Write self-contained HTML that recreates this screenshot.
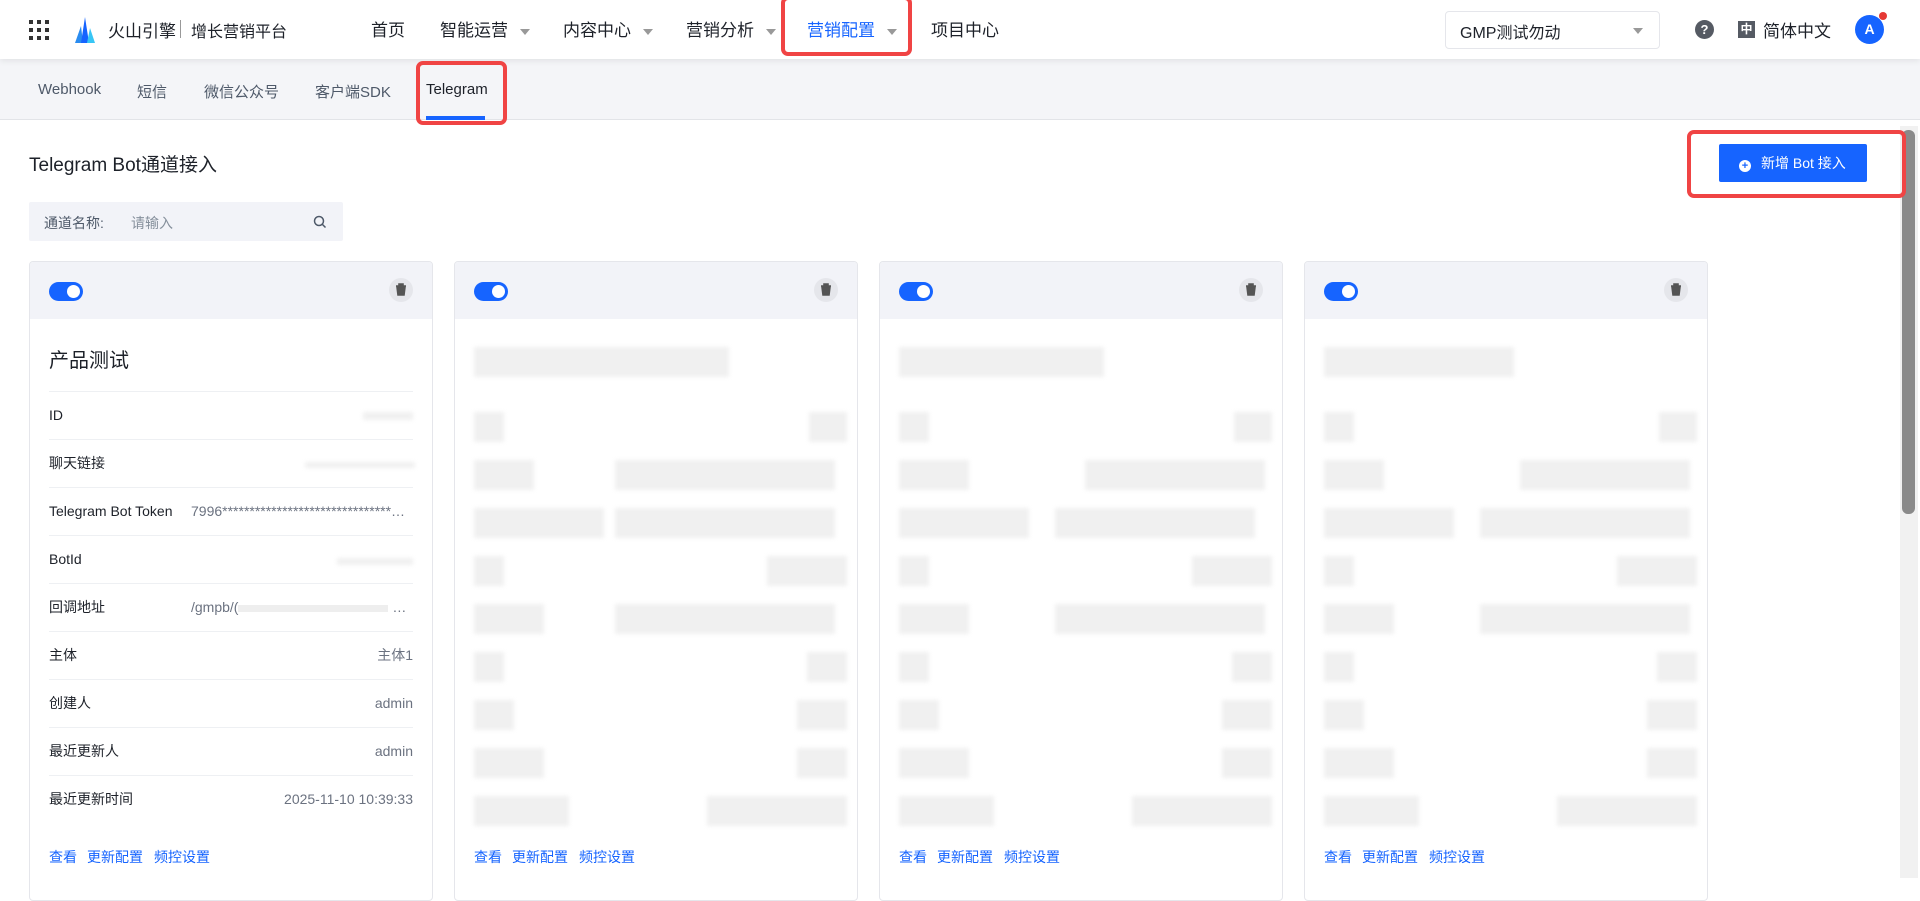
<!DOCTYPE html>
<html><head><meta charset="utf-8"><style>
*{box-sizing:border-box;margin:0;padding:0}
body{width:1920px;height:878px;overflow:hidden;background:#fff;font-family:"Liberation Sans","Noto Sans CJK SC",sans-serif;color:#1d2129;position:relative}
.abs{position:absolute}
.hdr{left:0;top:0;width:1920px;height:59px;background:#fff;box-shadow:0 2px 6px rgba(0,0,0,.08);z-index:2}
.nav{top:16px;font-size:17px;color:#1d2129}
.caret{display:inline-block;width:0;height:0;border-left:5px solid transparent;border-right:5px solid transparent;border-top:6px solid #999;margin-left:12px;vertical-align:middle}
.sub{left:0;top:59px;width:1920px;height:61px;background:#f4f5f8;border-bottom:1px solid #e2e4e8}
.tab{font-size:15px;color:#4e5969}
.red{border:4px solid #f04444;border-radius:7px;z-index:5}
.card{top:261px;width:404px;height:640px;border:1px solid #e5e6eb;border-radius:4px;background:#fff;overflow:hidden}
.ch{height:57px;background:#f2f3f8;position:relative}
.tog{position:absolute;left:19px;top:20px;width:34px;height:19px;border-radius:10px;background:#1664ff}
.tog:after{content:"";position:absolute;right:3px;top:3px;width:13px;height:13px;border-radius:50%;background:#fff}
.del{position:absolute;right:19px;top:16px;width:24px;height:24px;border-radius:50%;background:#e5e6eb}
.row{position:absolute;left:19px;right:19px;height:48px;border-top:1px solid #eef0f3;font-size:14px;color:#1d2129;line-height:46px}
.row .v{position:absolute;right:0;top:0;color:#6b7280}
.lnk{position:absolute;top:585px;font-size:14px;color:#1664ff}
.bl{position:absolute;background:#f0f0f0;filter:blur(2px)}
</style></head><body>
<div class="abs hdr">
 <div class="abs" style="left:29px;top:20px;width:20px;height:20px;display:grid;grid-template-columns:repeat(3,4px);gap:4px">
  <i style="background:#333"></i><i style="background:#333"></i><i style="background:#333"></i><i style="background:#333"></i><i style="background:#333"></i><i style="background:#333"></i><i style="background:#333"></i><i style="background:#333"></i><i style="background:#333"></i></div>
 <svg class="abs" style="left:73px;top:16px" width="24" height="28" viewBox="0 0 24 28"><path d="M2 27 L8 10 L10 27Z" fill="#2a8cf0"/><path d="M8 27 L12 1 L16 27Z" fill="#1664ff"/><path d="M14 27 L17 12 L22 27Z" fill="#38c6f5"/></svg>
 <div class="abs" style="left:108px;top:17px;font-size:17px">火山引擎</div>
 <div class="abs" style="left:180px;top:20px;width:1px;height:18px;background:#999"></div>
 <div class="abs" style="left:191px;top:18px;font-size:16px">增长营销平台</div>
 <div class="abs nav" style="left:371px">首页</div>
 <div class="abs nav" style="left:440px">智能运营<span class="caret"></span></div>
 <div class="abs nav" style="left:563px">内容中心<span class="caret"></span></div>
 <div class="abs nav" style="left:686px">营销分析<span class="caret"></span></div>
 <div class="abs nav" style="left:807px;color:#1664ff">营销配置<span class="caret"></span></div>
 <div class="abs nav" style="left:931px">项目中心</div>
 <div class="abs" style="left:1445px;top:11px;width:215px;height:38px;border:1px solid #e5e6eb;border-radius:4px;font-size:16px;padding:7px 14px">GMP测试勿动<span class="caret" style="position:absolute;right:16px;top:16px"></span></div>
 <div class="abs" style="left:1695px;top:20px;width:19px;height:19px;border-radius:50%;background:#555a63;color:#fff;font-size:13px;font-weight:bold;text-align:center;line-height:19px">?</div>
 <div class="abs" style="left:1738px;top:21px;width:17px;height:17px;background:#555a63;color:#fff;font-size:12px;text-align:center;line-height:17px;font-weight:bold">中</div>
 <div class="abs" style="left:1763px;top:17px;font-size:17px">简体中文</div>
 <div class="abs" style="left:1855px;top:15px;width:29px;height:29px;border-radius:50%;background:#1664ff;color:#fff;font-size:14px;text-align:center;line-height:29px;font-weight:bold">A</div>
 <div class="abs" style="left:1879px;top:12px;width:8px;height:8px;border-radius:50%;background:#e53935"></div>
</div>
<div class="abs red" style="left:781px;top:-4px;width:131px;height:60px"></div>
<div class="abs sub">
 <div class="abs tab" style="left:38px;top:22px">Webhook</div>
 <div class="abs tab" style="left:137px;top:22px">短信</div>
 <div class="abs tab" style="left:204px;top:22px">微信公众号</div>
 <div class="abs tab" style="left:315px;top:22px">客户端SDK</div>
 <div class="abs tab" style="left:426px;top:22px;color:#1d2129">Telegram</div>
 <div class="abs" style="left:426px;top:57px;width:59px;height:4px;background:#1664ff"></div>
</div>
<div class="abs red" style="left:416px;top:61px;width:91px;height:64px"></div>
<div class="abs" style="left:29px;top:150px;font-size:19px">Telegram Bot通道接入</div>
<div class="abs" style="left:1719px;top:144px;width:148px;height:38px;background:#1664ff;border-radius:2px;color:#fff;font-size:14px;line-height:38px;padding-left:20px"><span style="display:inline-block;width:12px;height:12px;border-radius:50%;background:#fff;color:#1664ff;font-size:11px;line-height:12px;text-align:center;font-weight:bold;margin-right:10px;vertical-align:-1px">+</span>新增 Bot 接入</div>
<div class="abs red" style="left:1687px;top:130px;width:219px;height:68px"></div>
<div class="abs" style="left:1900px;top:126px;width:18px;height:752px;background:#f1f1f1"></div>
<div class="abs" style="left:1902px;top:130px;width:13px;height:384px;background:#8a8a8a;border-radius:6px"></div>
<div class="abs" style="left:29px;top:202px;width:314px;height:39px;background:#f2f3f8;border-radius:2px;font-size:14px">
 <span class="abs" style="left:15px;top:11px;color:#4e5969">通道名称:</span><span class="abs" style="left:102px;top:11px;color:#86909c">请输入</span>
 <svg class="abs" style="left:284px;top:13px" width="14" height="14" viewBox="0 0 14 14"><circle cx="6" cy="6" r="4.5" stroke="#4e5969" stroke-width="1.5" fill="none"/><path d="M9.5 9.5 L12.5 12.5" stroke="#4e5969" stroke-width="1.5"/></svg>
</div>

<div class="abs card" style="left:29px">
 <div class="ch"><div class="tog"></div><div class="del"><svg width="24" height="24" viewBox="0 0 24 24"><path d="M7 8h10M10 8V6h4v2M8 9h8l-1 8H9z" stroke="#555" stroke-width="1.6" fill="#555"/></svg></div></div>
 <div class="abs" style="left:19px;top:82px;font-size:20px">产品测试</div>
 <div class="row" style="top:129px">ID<span class="bl" style="right:0;top:20px;width:50px;height:8px"></span></div>
 <div class="row" style="top:177px">聊天链接<span class="bl" style="right:-2px;top:22px;width:110px;height:6px"></span></div>
 <div class="row" style="top:225px">Telegram Bot Token<span class="v" style="left:142px;right:auto">7996*******************************…</span></div>
 <div class="row" style="top:273px">BotId<span class="bl" style="right:0;top:22px;width:76px;height:7px"></span></div>
 <div class="row" style="top:321px">回调地址<span class="v" style="left:142px;right:auto">/gmpb/(<span style="display:inline-block;width:150px;height:7px;background:#eee"></span> …</span></div>
 <div class="row" style="top:369px">主体<span class="v">主体1</span></div>
 <div class="row" style="top:417px">创建人<span class="v">admin</span></div>
 <div class="row" style="top:465px">最近更新人<span class="v">admin</span></div>
 <div class="row" style="top:513px">最近更新时间<span class="v">2025-11-10 10:39:33</span></div>
 <span class="lnk" style="left:19px">查看</span><span class="lnk" style="left:57px">更新配置</span><span class="lnk" style="left:124px">频控设置</span>
</div>

<div class="abs card" style="left:454px">
 <div class="ch"><div class="tog"></div><div class="del"><svg width="24" height="24" viewBox="0 0 24 24"><path d="M7 8h10M10 8V6h4v2M8 9h8l-1 8H9z" stroke="#555" stroke-width="1.6" fill="#555"/></svg></div></div>
 <div class="bl" style="left:19px;top:85px;width:255px;height:30px"></div>
 <div class="bl" style="left:19px;top:150px;width:30px;height:30px"></div><div class="bl" style="right:10px;top:150px;width:38px;height:30px"></div>
 <div class="bl" style="left:19px;top:198px;width:60px;height:30px"></div><div class="bl" style="left:160px;top:198px;width:220px;height:30px"></div>
 <div class="bl" style="left:19px;top:246px;width:130px;height:30px"></div><div class="bl" style="left:160px;top:246px;width:220px;height:30px"></div>
 <div class="bl" style="left:19px;top:294px;width:30px;height:30px"></div><div class="bl" style="right:10px;top:294px;width:80px;height:30px"></div>
 <div class="bl" style="left:19px;top:342px;width:70px;height:30px"></div><div class="bl" style="left:160px;top:342px;width:220px;height:30px"></div>
 <div class="bl" style="left:19px;top:390px;width:30px;height:30px"></div><div class="bl" style="right:10px;top:390px;width:40px;height:30px"></div>
 <div class="bl" style="left:19px;top:438px;width:40px;height:30px"></div><div class="bl" style="right:10px;top:438px;width:50px;height:30px"></div>
 <div class="bl" style="left:19px;top:486px;width:70px;height:30px"></div><div class="bl" style="right:10px;top:486px;width:50px;height:30px"></div>
 <div class="bl" style="left:19px;top:534px;width:95px;height:30px"></div><div class="bl" style="right:10px;top:534px;width:140px;height:30px"></div>
 <span class="lnk" style="left:19px">查看</span><span class="lnk" style="left:57px">更新配置</span><span class="lnk" style="left:124px">频控设置</span>
</div>

<div class="abs card" style="left:879px">
 <div class="ch"><div class="tog"></div><div class="del"><svg width="24" height="24" viewBox="0 0 24 24"><path d="M7 8h10M10 8V6h4v2M8 9h8l-1 8H9z" stroke="#555" stroke-width="1.6" fill="#555"/></svg></div></div>
 <div class="bl" style="left:19px;top:85px;width:205px;height:30px"></div>
 <div class="bl" style="left:19px;top:150px;width:30px;height:30px"></div><div class="bl" style="right:10px;top:150px;width:38px;height:30px"></div>
 <div class="bl" style="left:19px;top:198px;width:70px;height:30px"></div><div class="bl" style="left:205px;top:198px;width:180px;height:30px"></div>
 <div class="bl" style="left:19px;top:246px;width:130px;height:30px"></div><div class="bl" style="left:175px;top:246px;width:200px;height:30px"></div>
 <div class="bl" style="left:19px;top:294px;width:30px;height:30px"></div><div class="bl" style="right:10px;top:294px;width:80px;height:30px"></div>
 <div class="bl" style="left:19px;top:342px;width:70px;height:30px"></div><div class="bl" style="left:175px;top:342px;width:210px;height:30px"></div>
 <div class="bl" style="left:19px;top:390px;width:30px;height:30px"></div><div class="bl" style="right:10px;top:390px;width:40px;height:30px"></div>
 <div class="bl" style="left:19px;top:438px;width:40px;height:30px"></div><div class="bl" style="right:10px;top:438px;width:50px;height:30px"></div>
 <div class="bl" style="left:19px;top:486px;width:70px;height:30px"></div><div class="bl" style="right:10px;top:486px;width:50px;height:30px"></div>
 <div class="bl" style="left:19px;top:534px;width:95px;height:30px"></div><div class="bl" style="right:10px;top:534px;width:140px;height:30px"></div>
 <span class="lnk" style="left:19px">查看</span><span class="lnk" style="left:57px">更新配置</span><span class="lnk" style="left:124px">频控设置</span>
</div>

<div class="abs card" style="left:1304px">
 <div class="ch"><div class="tog"></div><div class="del"><svg width="24" height="24" viewBox="0 0 24 24"><path d="M7 8h10M10 8V6h4v2M8 9h8l-1 8H9z" stroke="#555" stroke-width="1.6" fill="#555"/></svg></div></div>
 <div class="bl" style="left:19px;top:85px;width:190px;height:30px"></div>
 <div class="bl" style="left:19px;top:150px;width:30px;height:30px"></div><div class="bl" style="right:10px;top:150px;width:38px;height:30px"></div>
 <div class="bl" style="left:19px;top:198px;width:60px;height:30px"></div><div class="bl" style="left:215px;top:198px;width:170px;height:30px"></div>
 <div class="bl" style="left:19px;top:246px;width:130px;height:30px"></div><div class="bl" style="left:175px;top:246px;width:210px;height:30px"></div>
 <div class="bl" style="left:19px;top:294px;width:30px;height:30px"></div><div class="bl" style="right:10px;top:294px;width:80px;height:30px"></div>
 <div class="bl" style="left:19px;top:342px;width:70px;height:30px"></div><div class="bl" style="left:175px;top:342px;width:210px;height:30px"></div>
 <div class="bl" style="left:19px;top:390px;width:30px;height:30px"></div><div class="bl" style="right:10px;top:390px;width:40px;height:30px"></div>
 <div class="bl" style="left:19px;top:438px;width:40px;height:30px"></div><div class="bl" style="right:10px;top:438px;width:50px;height:30px"></div>
 <div class="bl" style="left:19px;top:486px;width:70px;height:30px"></div><div class="bl" style="right:10px;top:486px;width:50px;height:30px"></div>
 <div class="bl" style="left:19px;top:534px;width:95px;height:30px"></div><div class="bl" style="right:10px;top:534px;width:140px;height:30px"></div>
 <span class="lnk" style="left:19px">查看</span><span class="lnk" style="left:57px">更新配置</span><span class="lnk" style="left:124px">频控设置</span>
</div>
</body></html>
